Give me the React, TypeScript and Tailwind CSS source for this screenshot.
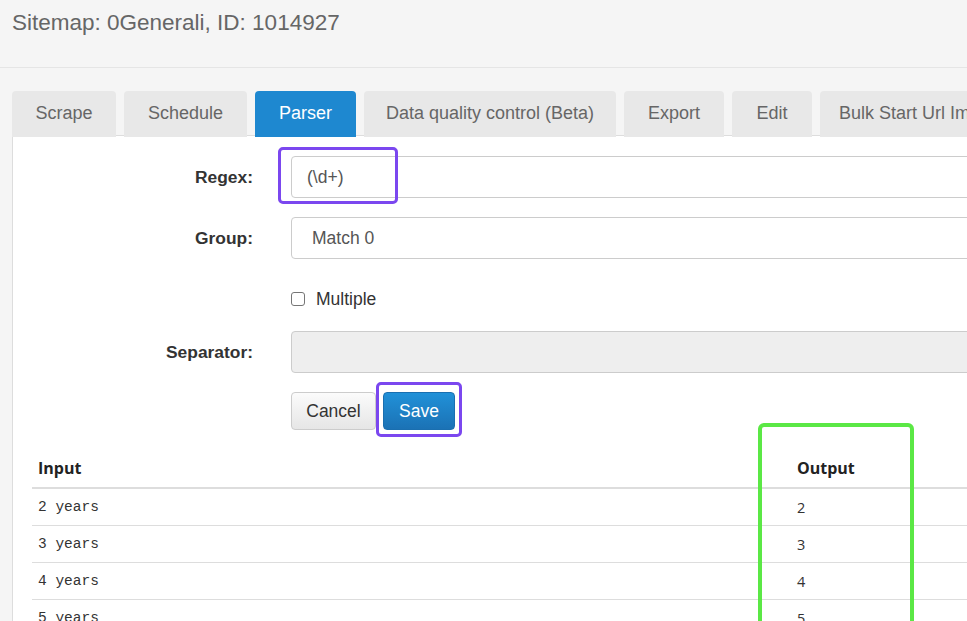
import React from "react";

const tabs = [
  { label: "Scrape", w: "w-[104px]" },
  { label: "Schedule", w: "w-[123px]" },
  { label: "Parser", w: "w-[101px]", active: true },
  { label: "Data quality control (Beta)", w: "w-[252px]" },
  { label: "Export", w: "w-[100px]" },
  { label: "Edit", w: "w-[80px]" },
  { label: "Bulk Start Url Import", w: "w-[200px]" },
];

const rows = [
  { input: "2 years", output: "2" },
  { input: "3 years", output: "3" },
  { input: "4 years", output: "4" },
  { input: "5 years", output: "5" },
];

const sans = "font-['Liberation_Sans',Arial,sans-serif]";

const FieldRow = ({ label, children }: { label?: string; children: React.ReactNode }) => (
  <div className="flex items-center">
    <div className={`w-[240px] shrink-0 text-right text-[17.4px] font-bold text-[#333] ${sans}`}>{label}</div>
    <div className="ml-[38px] flex-1">{children}</div>
  </div>
);

export default function App() {
  return (
    <div className={`w-[967px] h-[621px] overflow-hidden bg-[#f5f5f5] ${sans}`}>
      <div className="w-[1300px]">
        <div className="h-[68px] border-b border-[#e5e5e5] pl-[12px] pt-[8px]">
          <h1 className="text-[22.5px] leading-[30px] text-[#666]">Sitemap: 0Generali, ID: 1014927</h1>
        </div>

        <div className="ml-[12px] mt-[23px] flex gap-[8px] border-b border-[#ddd] h-[45px]">
          {tabs.map((t) => (
            <div
              key={t.label}
              className={`${t.w} shrink-0 h-[46px] rounded-t-[4px] flex items-center justify-center pb-[2px] text-[18px] whitespace-nowrap ${
                t.active ? "bg-[#1e88d0] text-white" : "bg-[#e8e8e8] text-[#666]"
              }`}
            >
              {t.label}
            </div>
          ))}
        </div>

        <div className="ml-[12px] bg-white border-l border-[#ddd] pt-[20px] pb-[40px]">
          <div className="flex flex-col gap-[19px]">
            <FieldRow label="Regex:">
              <div className="relative">
                <div className="h-[42px] rounded-[4px] border border-[#ccc] flex items-center pl-[15px] text-[17.5px] text-[#555]">
                  (\d+)
                </div>
                <div className="absolute left-[-13px] top-[-9px] w-[120px] h-[57px] rounded-[5px] border-[3px] border-[#7b47ef]" />
              </div>
            </FieldRow>
            <FieldRow label="Group:">
              <div className="h-[42px] rounded-[4px] border border-[#ccc] flex items-center pl-[20px] text-[17.5px] text-[#555]">
                Match 0
              </div>
            </FieldRow>
            <FieldRow>
              <label className="flex items-center h-[34px] pt-[8px] text-[17.5px] text-[#333]">
                <span className="w-[14px] h-[14px] rounded-[3px] border border-[#767676] bg-white" />
                <span className="ml-[11px]">Multiple</span>
              </label>
            </FieldRow>
            <FieldRow label="Separator:">
              <div className="h-[42px] rounded-[4px] border border-[#ccc] bg-[#eee]" />
            </FieldRow>
            <FieldRow>
              <div className="flex gap-[7px]">
                <button className="h-[38px] w-[85px] rounded-[4px] border border-[#ccc] bg-gradient-to-b from-[#fbfbfb] to-[#e6e6e6] text-[17.5px] text-[#333]">
                  Cancel
                </button>
                <div className="relative">
                  <button className="h-[38px] w-[72px] rounded-[4px] border border-[#1a6fb0] bg-gradient-to-b from-[#2191d8] to-[#1b72b5] text-[17.5px] text-white">
                    Save
                  </button>
                  <div className="absolute left-[-7px] top-[-10px] w-[86px] h-[55px] rounded-[5px] border-[3px] border-[#7b47ef]" />
                </div>
              </div>
            </FieldRow>
          </div>

          <div className="relative ml-[19px] mt-[14px]">
            <table className="table-fixed w-[1200px] border-collapse">
              <colgroup>
                <col className="w-[757px]" />
                <col />
              </colgroup>
              <thead>
                <tr className="border-b-2 border-[#ddd]">
                  <th className="h-[44px] text-left px-[6px] pt-[4px] text-[16px] font-bold text-[#222] font-['Open_Sans',sans-serif]">Input</th>
                  <th className="h-[44px] text-left px-[8px] pt-[4px] text-[16px] font-bold text-[#222] font-['Open_Sans',sans-serif]">Output</th>
                </tr>
              </thead>
              <tbody>
                {rows.map((r) => (
                  <tr key={r.input} className="border-b border-[#ddd]">
                    <td className="h-[37px] px-[6px] pt-[3px] text-[14.5px] text-[#333] font-['Liberation_Mono',monospace]">{r.input}</td>
                    <td className="h-[37px] px-[8px] pt-[2px] text-[14.5px] text-[#333] font-['Open_Sans',sans-serif]">{r.output}</td>
                  </tr>
                ))}
              </tbody>
            </table>
            <div className="absolute left-[726px] top-[-21px] w-[156px] h-[260px] rounded-[6px] border-[4px] border-[#5be845]" />
          </div>
        </div>
      </div>
    </div>
  );
}
